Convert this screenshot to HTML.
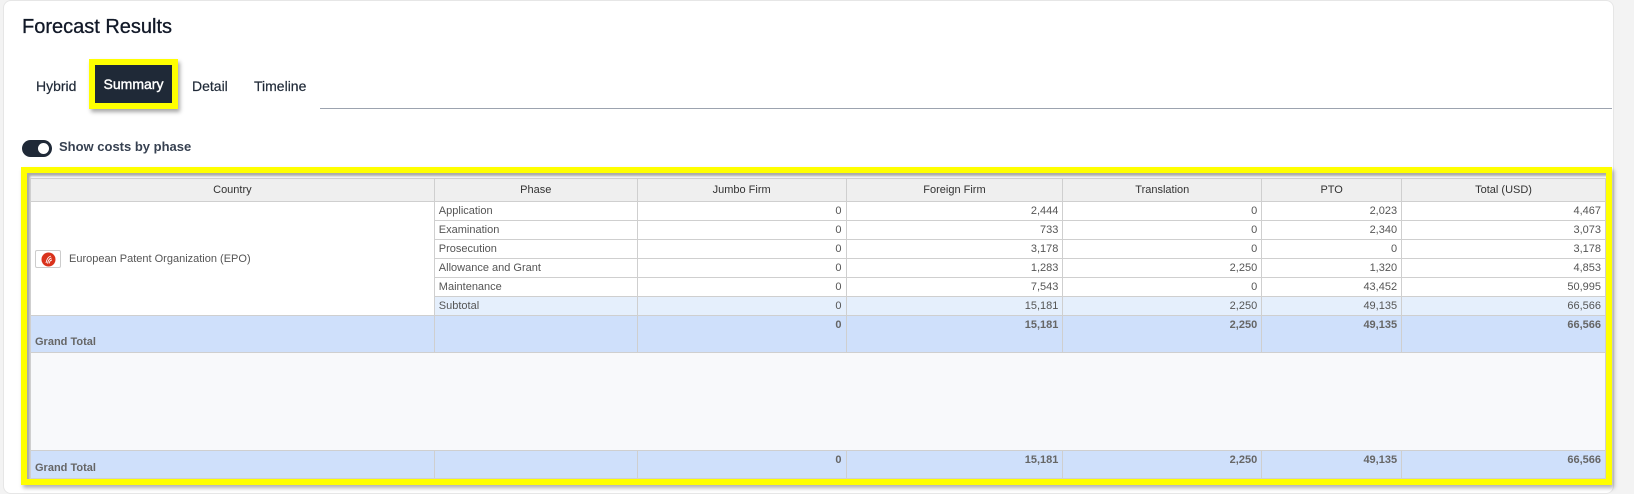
<!DOCTYPE html>
<html><head><meta charset="utf-8"><style>
*{box-sizing:border-box;margin:0;padding:0}
body{width:1634px;height:494px;background:#f3f3f3;font-family:"Liberation Sans",sans-serif;position:relative;overflow:hidden}
.card{position:absolute;left:3px;top:0;width:1611px;height:494px;background:#fff;border-radius:8px;border:1px solid #e6e6e6}
.title{position:absolute;left:22px;top:16px;font-size:20px;color:#111827;-webkit-text-stroke:0.3px #111827}
.tab{position:absolute;top:78px;font-size:14px;color:#1f2937;-webkit-text-stroke:0.2px #1f2937}
.sumbox{position:absolute;left:89px;top:59px;width:89px;height:50px;background:#ff0;box-shadow:2px 3px 4px rgba(0,0,0,.35)}
.sumin{position:absolute;left:6px;top:6px;width:77px;height:38px;background:#1f2937;color:#fff;font-size:14px;text-align:center;line-height:38px;-webkit-text-stroke:0.4px #fff}
.uline{position:absolute;left:320px;top:108px;width:1292px;height:1px;background:#9ca3af}
.tog{position:absolute;left:22px;top:140px;width:30px;height:17px;border-radius:9px;background:#1f2937}
.tog i{position:absolute;right:3px;top:3px;width:11px;height:11px;border-radius:50%;background:#fff}
.togl{position:absolute;left:59px;top:139px;font-size:13px;font-weight:bold;color:#374151}
.ybox{position:absolute;left:21px;top:167px;width:1591px;height:318px;border:6px solid #ff0;box-shadow:2px 3px 4px rgba(0,0,0,.3)}
.inner{position:absolute;left:0;top:0;right:0;bottom:0;box-shadow:inset 3px 3px 2px #aaa;background:#f8f9fb}
table{position:absolute;left:3px;top:5px;border-collapse:collapse;table-layout:fixed;font-size:11px;color:#555}
td,th{border:1px solid #cfcfcf;padding:0 4px;white-space:nowrap}
th{background:#efefef;font-weight:normal;height:23px;color:#333}
td{height:19px;background:#fff}
td.n{text-align:right}
tr.sub td{background:#e5effc}
tr.gt td{background:#cfe0fb;font-weight:bold;color:#666;height:37px;vertical-align:top;padding-top:3px}
tr.gt td.l{vertical-align:bottom;padding-bottom:4px}
tr.e td{background:#f8f9fb;height:98px}
tr.gt2 td{height:28px}
.logo{display:inline-block;vertical-align:middle;width:26px;height:18px;border:1px solid #ccc;border-radius:2px;margin-right:8px;position:relative;background:#fff}
.logo svg{position:absolute;left:5px;top:1px}
</style></head><body>
<div class="card"></div>
<div class="title">Forecast Results</div>
<div class="tab" style="left:36px">Hybrid</div>
<div class="sumbox"><div class="sumin">Summary</div></div>
<div class="tab" style="left:192px">Detail</div>
<div class="tab" style="left:254px">Timeline</div>
<div class="uline"></div>
<div class="tog"><i></i></div>
<div class="togl">Show costs by phase</div>
<div class="ybox"><div class="inner"></div>
<table>
<colgroup><col style="width:404px"><col style="width:203px"><col style="width:209px"><col style="width:217px"><col style="width:199px"><col style="width:140px"><col style="width:204px"></colgroup>
<tr><th>Country</th><th>Phase</th><th>Jumbo Firm</th><th>Foreign Firm</th><th>Translation</th><th>PTO</th><th>Total (USD)</th></tr>
<tr><td rowspan="6" style="padding-left:4px"><span class="logo"><svg width="15" height="15" viewBox="0 0 15 15"><circle cx="7.5" cy="7.5" r="7" fill="#d9321c"/><path d="M5 11 Q6 5 10 4 M6.5 11.5 Q7.5 6.5 10.5 6 M8 11.5 Q9 8 11 8" stroke="#fff" stroke-width="0.9" fill="none"/></svg></span>European Patent Organization (EPO)</td><td>Application</td><td class="n">0</td><td class="n">2,444</td><td class="n">0</td><td class="n">2,023</td><td class="n">4,467</td></tr>
<tr><td>Examination</td><td class="n">0</td><td class="n">733</td><td class="n">0</td><td class="n">2,340</td><td class="n">3,073</td></tr>
<tr><td>Prosecution</td><td class="n">0</td><td class="n">3,178</td><td class="n">0</td><td class="n">0</td><td class="n">3,178</td></tr>
<tr><td>Allowance and Grant</td><td class="n">0</td><td class="n">1,283</td><td class="n">2,250</td><td class="n">1,320</td><td class="n">4,853</td></tr>
<tr><td>Maintenance</td><td class="n">0</td><td class="n">7,543</td><td class="n">0</td><td class="n">43,452</td><td class="n">50,995</td></tr>
<tr class="sub"><td style="background:#e5effc">Subtotal</td><td class="n">0</td><td class="n">15,181</td><td class="n">2,250</td><td class="n">49,135</td><td class="n">66,566</td></tr>
<tr class="gt"><td class="l">Grand Total</td><td></td><td class="n">0</td><td class="n">15,181</td><td class="n">2,250</td><td class="n">49,135</td><td class="n">66,566</td></tr>
<tr class="e"><td colspan="7"></td></tr>
<tr class="gt gt2"><td class="l">Grand Total</td><td></td><td class="n">0</td><td class="n">15,181</td><td class="n">2,250</td><td class="n">49,135</td><td class="n">66,566</td></tr>
</table></div>
</body></html>
